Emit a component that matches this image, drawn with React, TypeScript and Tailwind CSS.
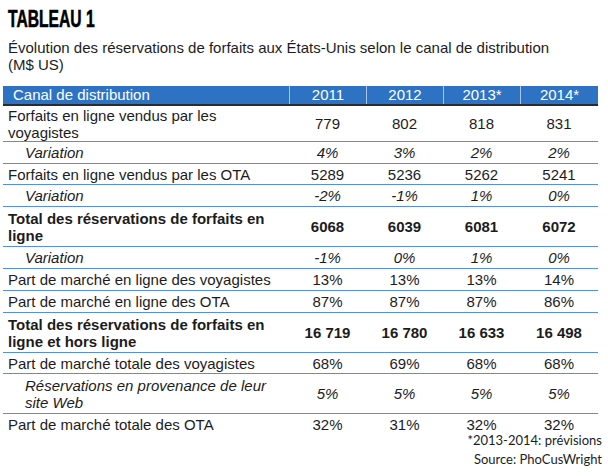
type Row = {
  label: string;
  values: string[];
  kind?: 'normal' | 'variation' | 'bold';
  h: string;
};

const rows: Row[] = [
  { label: 'Forfaits en ligne vendus par les voyagistes', values: ['779', '802', '818', '831'], h: 'h-[36px]' },
  { label: 'Variation', values: ['4%', '3%', '2%', '2%'], kind: 'variation', h: 'h-[22px]' },
  { label: 'Forfaits en ligne vendus par les OTA', values: ['5289', '5236', '5262', '5241'], h: 'h-[21px]' },
  { label: 'Variation', values: ['-2%', '-1%', '1%', '0%'], kind: 'variation', h: 'h-[22px]' },
  { label: 'Total des réservations de forfaits en ligne', values: ['6068', '6039', '6081', '6072'], kind: 'bold', h: 'h-[40px]' },
  { label: 'Variation', values: ['-1%', '0%', '1%', '0%'], kind: 'variation', h: 'h-[22px]' },
  { label: 'Part de marché en ligne des voyagistes', values: ['13%', '13%', '13%', '14%'], h: 'h-[22px]' },
  { label: 'Part de marché en ligne des OTA', values: ['87%', '87%', '87%', '86%'], h: 'h-[22px]' },
  { label: 'Total des réservations de forfaits en ligne et hors ligne', values: ['16 719', '16 780', '16 633', '16 498'], kind: 'bold', h: 'h-[40px]' },
  { label: 'Part de marché totale des voyagistes', values: ['68%', '69%', '68%', '68%'], h: 'h-[21px]' },
  { label: 'Réservations en provenance de leur site Web', values: ['5%', '5%', '5%', '5%'], kind: 'variation', h: 'h-[40px]' },
  { label: 'Part de marché totale des OTA', values: ['32%', '31%', '32%', '32%'], h: 'h-[21px]' },
];

const years = ['2011', '2012', '2013*', '2014*'];

export default function App() {
  return (
    <div className="w-[608px] h-[476px] bg-white text-[#1c1c1c] font-['Liberation_Sans',Arial,sans-serif] overflow-hidden">
      <div className="px-2 pt-[6px]">
        <h1 className="inline-block origin-left scale-x-[0.68] font-['Liberation_Sans',Arial,sans-serif] font-bold text-[23px] leading-[26px] text-black [-webkit-text-stroke:0.6px_black]">
          TABLEAU 1
        </h1>
        <p className="mt-[5px] text-[15px] leading-[17px]">
          Évolution des réservations de forfaits aux États-Unis selon le canal de distribution
          <br />
          (M$ US)
        </p>
      </div>

      <div className="ml-[3px] mt-[13px] w-[595px]">
        {/* en-tête */}
        <div className="grid grid-cols-[286px_77px_77px_77px_78px] bg-[#2e72c4] text-white text-[15px] leading-[18px] border-b-2 border-[#2b2b2b]">
          <div className="pl-[10px]">Canal de distribution</div>
          {years.map((y) => (
            <div key={y} className="text-center border-l border-[#a9c6ea]">
              {y}
            </div>
          ))}
        </div>

        {rows.map((r, i) => (
          <div
            key={i}
            className={`grid grid-cols-[286px_77px_77px_77px_78px] items-center text-[15px] leading-[17px] ${r.h} ${
              i < rows.length - 1 ? 'border-b border-[#5a8fd5]' : ''
            } ${r.kind === 'bold' ? 'font-bold' : ''}`}
          >
            <div className={r.kind === 'variation' ? 'pl-[22px] pr-[20px] italic' : 'pl-[5px] pr-[6px]'}>{r.label}</div>
            {r.values.map((v, j) => (
              <div key={j} className={`text-center ${r.kind === 'variation' ? 'italic' : ''}`}>
                {v}
              </div>
            ))}
          </div>
        ))}

        <div className="flex flex-col items-end -mr-[4px] -mt-[4px] font-['Lato','Open_Sans',sans-serif] text-[13px] leading-[19px] text-[#1c1c1c]">
          <span>*2013-2014: prévisions</span>
          <span>Source: PhoCusWright</span>
        </div>
      </div>
    </div>
  );
}
